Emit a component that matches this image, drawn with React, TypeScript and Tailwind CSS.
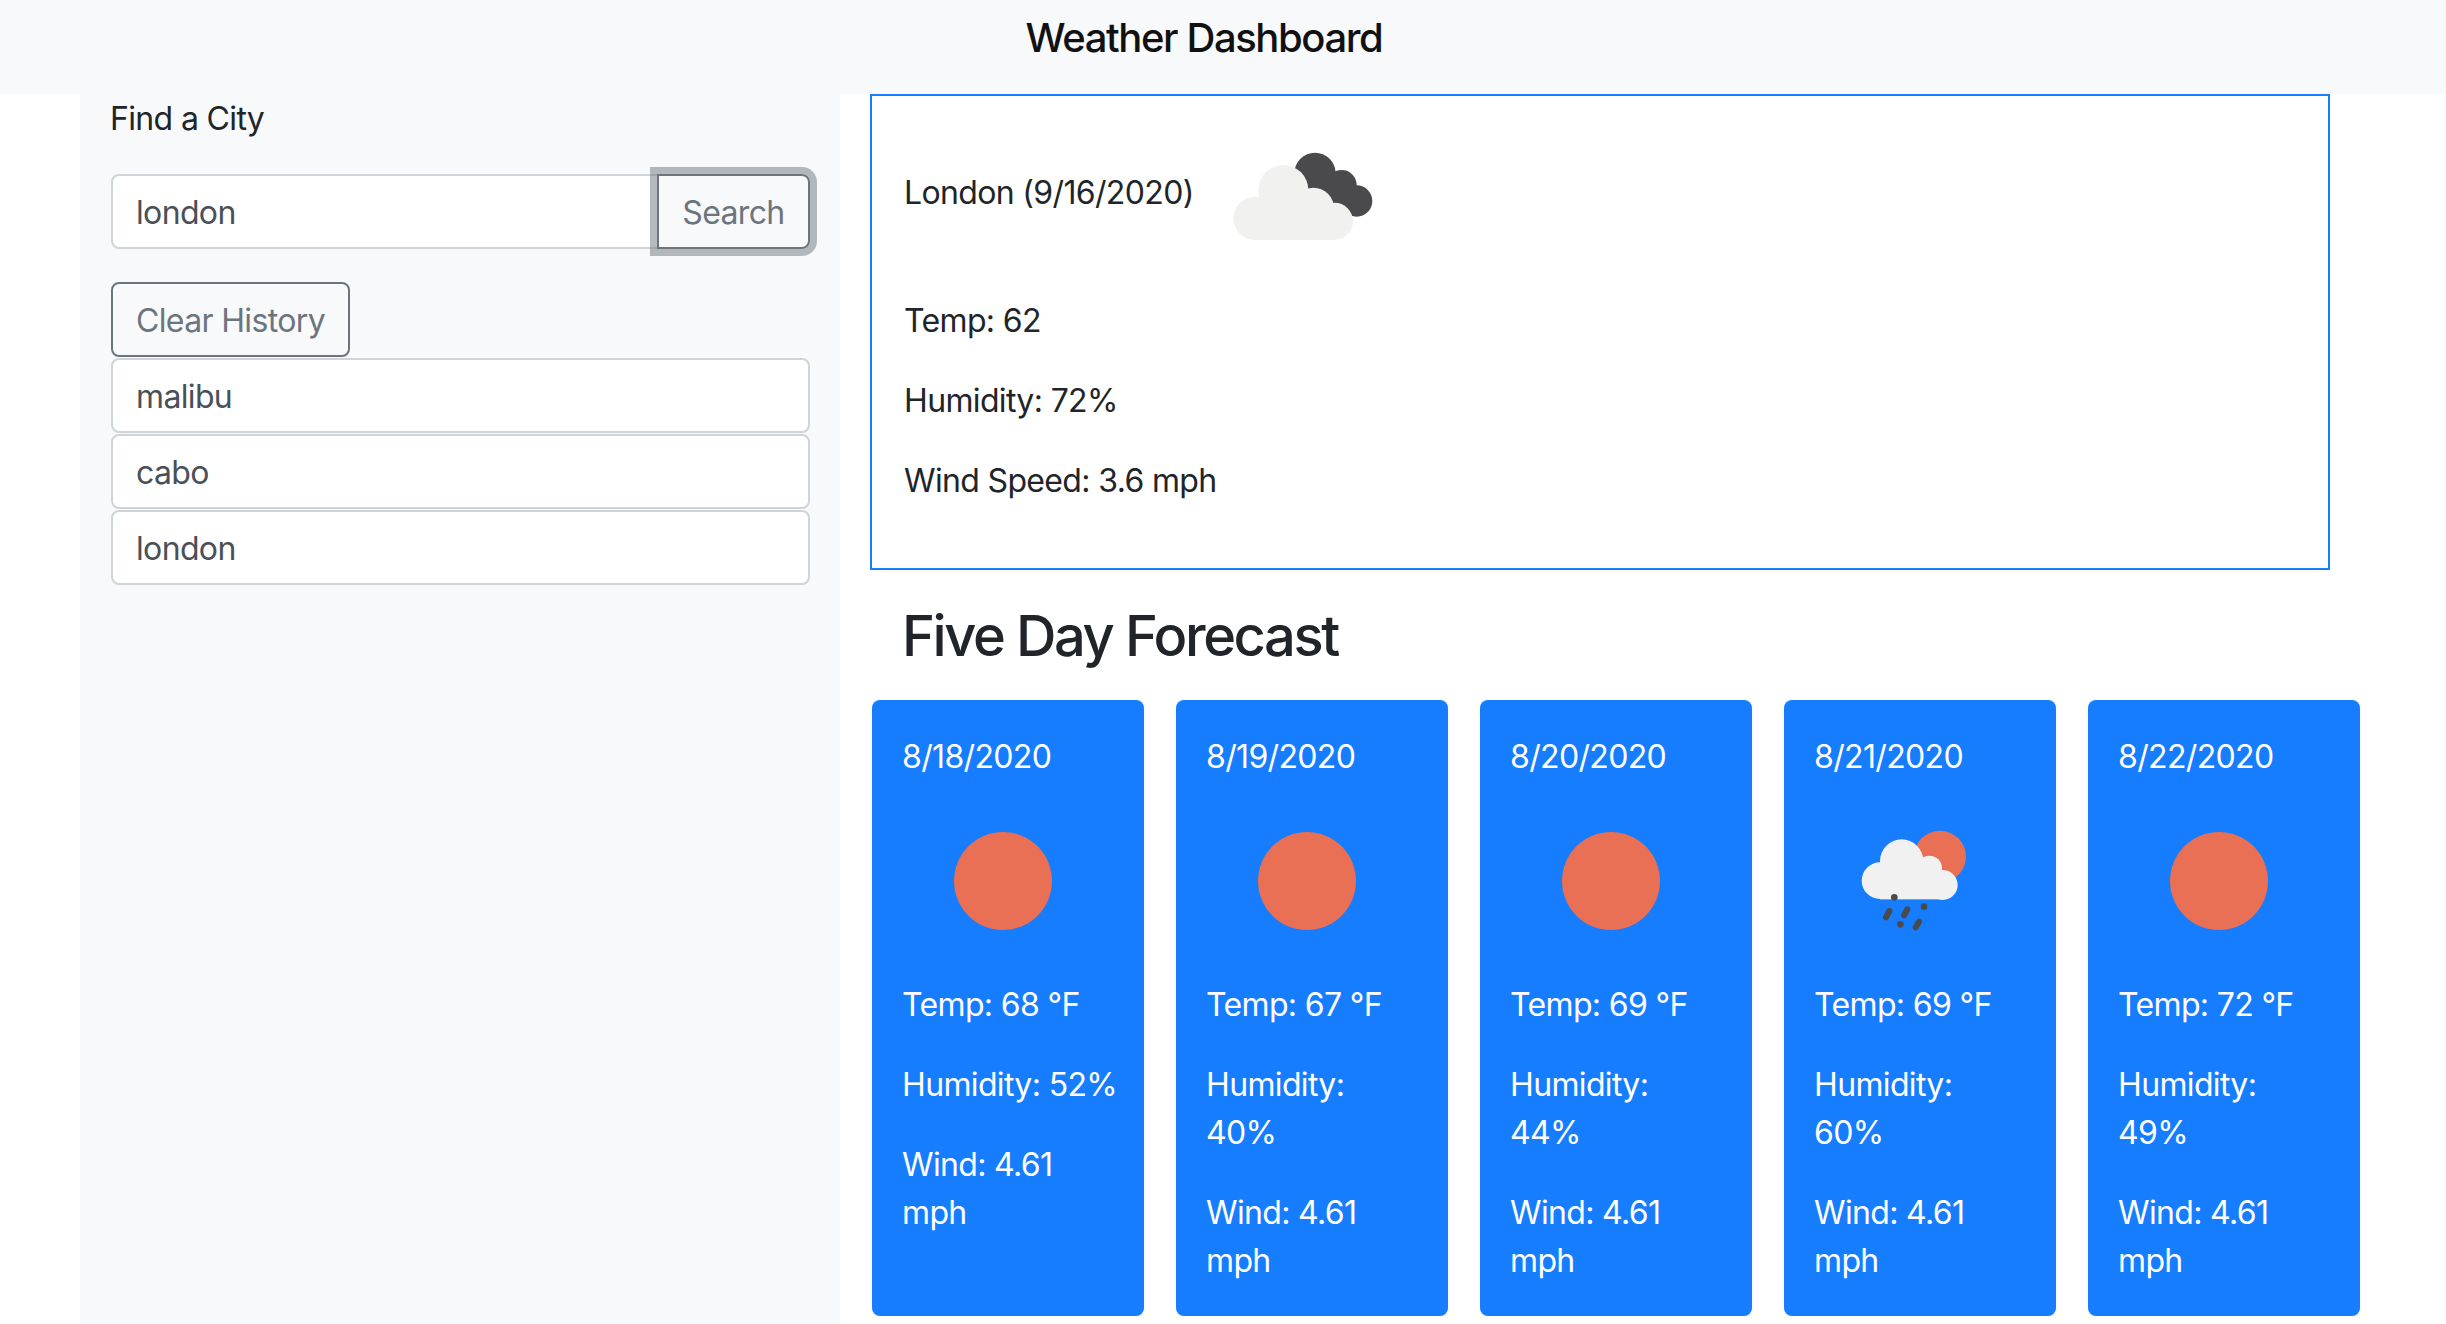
import React from "react";

const history = ["malibu", "cabo", "london"];

const forecast = [
  { date: "8/18/2020", icon: "sun", temp: "Temp: 68 °F", humidity: ["Humidity: 52%"], },
  { date: "8/19/2020", icon: "sun", temp: "Temp: 67 °F", humidity: ["Humidity:", "40%"] },
  { date: "8/20/2020", icon: "sun", temp: "Temp: 69 °F", humidity: ["Humidity:", "44%"] },
  { date: "8/21/2020", icon: "rain", temp: "Temp: 69 °F", humidity: ["Humidity:", "60%"] },
  { date: "8/22/2020", icon: "sun", temp: "Temp: 72 °F", humidity: ["Humidity:", "49%"] },
];

function CloudsIcon() {
  return (
    <svg width="200" height="130" viewBox="0 0 600 390" className="shrink-0">
      <g fill="#4a4a4c">
        <circle cx="345" cy="130" r="62" />
        <circle cx="425" cy="165" r="45" />
        <circle cx="470" cy="213" r="47" />
        <path d="M345 130L425 165L470 213L460 258L340 235Z" />
      </g>
      <g fill="#f1f1f0">
        <circle cx="250" cy="180" r="75" />
        <circle cx="340" cy="235" r="62" />
        <circle cx="403" cy="274" r="56" />
        <circle cx="165" cy="265" r="65" />
        <rect x="165" y="235" width="238" height="95" />
      </g>
    </svg>
  );
}

function SunIcon() {
  return (
    <svg width="200" height="136" viewBox="0 0 200 136" className="block">
      <circle cx="100" cy="68" r="49" fill="#e96f55" />
    </svg>
  );
}

function RainIcon() {
  // drawn in the crop's 3x units, 160x130 on the page
  return (
    <svg width="200" height="136" viewBox="0 0 200 136" className="block">
      <g transform="translate(25 -3) scale(0.3333)">
        <circle cx="300" cy="140" r="78" fill="#e96f55" />
        <g fill="#f1f1f1">
          <circle cx="185" cy="153" r="65" />
          <circle cx="120" cy="212" r="55" />
          <circle cx="268" cy="175" r="38" />
          <circle cx="308" cy="225" r="45" />
          <rect x="120" y="190" width="188" height="78" />
        </g>
        <g fill="#4a4a4c">
          <circle cx="163" cy="262" r="10" />
          <circle cx="252" cy="290" r="10" />
          <circle cx="181" cy="343" r="10" />
        </g>
        <g stroke="#4a4a4c" strokeWidth="18" strokeLinecap="round">
          <path d="M148 303L138 322" />
          <path d="M202 298L192 316" />
          <path d="M237 335L227 352" />
        </g>
      </g>
    </svg>
  );
}

export default function App() {
  return (
    <div className="h-[1324px] overflow-hidden bg-white font-['Inter',sans-serif] text-[32px] leading-[48px] tracking-[-0.65px] text-[#212529]">
      <header className="flex h-[94px] items-start justify-center bg-[#f8f9fa] pr-[38px] pt-[14px]">
        <h1 className="text-[40px] font-medium tracking-[-1.4px] text-[#111]">Weather Dashboard</h1>
      </header>

      <div className="flex pl-[80px]">
        <aside className="h-[1230px] w-[760px] bg-[#f8f9fa] pl-[30px] pr-[31px] pt-px">
          <p>Find a City</p>

          <div className="mt-[31px] ml-px flex w-[699px]">
            <input
              readOnly
              value="london"
              className="h-[75px] min-w-0 flex-1 rounded-l-[8px] border-2 border-[#ced4da] bg-white px-[23px] pt-[2px] text-[#495057] outline-none"
            />
            <button className="relative -ml-[2px] h-[75px] w-[153px] rounded-r-[8px] border-2 border-[#6c757d] pt-[2px] text-[#6c757d] shadow-[0_0_0_7px_rgba(108,117,125,0.5)]">
              Search
            </button>
          </div>

          <button className="mt-[33px] ml-px block h-[75px] w-[239px] rounded-[8px] border-2 border-[#6c757d] pt-[2px] text-[#6c757d]">
            Clear History
          </button>

          <ul className="mt-px ml-px flex w-[699px] flex-col gap-px">
            {history.map((city) => (
              <li
                key={city}
                className="flex h-[75px] items-center rounded-[8px] border-2 border-[#ced4da] bg-white px-[23px] pt-[2px] text-[#495057]"
              >
                {city}
              </li>
            ))}
          </ul>
        </aside>

        <main className="pl-[30px]">
          <section className="flex h-[476px] w-[1460px] flex-col border-2 border-[#167dff] pl-[32px] pt-[34px]">
            <div className="flex h-[130px] items-center">
              <span className="mb-[4px] w-[296px] shrink-0 whitespace-nowrap">London (9/16/2020)</span>
              <CloudsIcon />
            </div>
            <p className="mt-[37px]">Temp: 62</p>
            <p className="mt-[32px]">Humidity: 72%</p>
            <p className="mt-[32px]">Wind Speed: 3.6 mph</p>
          </section>

          <h2 className="ml-[32px] mt-[33px] text-[56px] font-medium leading-[67px] tracking-[-2.4px]">Five Day Forecast</h2>

          <div className="ml-[2px] mt-[30px] flex gap-[32px]">
            {forecast.map((day) => (
              <article key={day.date} className="h-[616px] w-[272px] rounded-[8px] bg-[#167dff] pl-[30px] pt-[33px] text-white">
                <p className="mb-[32px]">{day.date}</p>
                <div className="mb-[32px] pl-px">{day.icon === "rain" ? <RainIcon /> : <SunIcon />}</div>
                <p className="mb-[32px]">{day.temp}</p>
                <p className="mb-[32px]">
                  {day.humidity.map((line) => (
                    <span key={line} className="block whitespace-nowrap">
                      {line}
                    </span>
                  ))}
                </p>
                <p>Wind: 4.61</p>
                <p>mph</p>
              </article>
            ))}
          </div>
        </main>
      </div>
    </div>
  );
}
